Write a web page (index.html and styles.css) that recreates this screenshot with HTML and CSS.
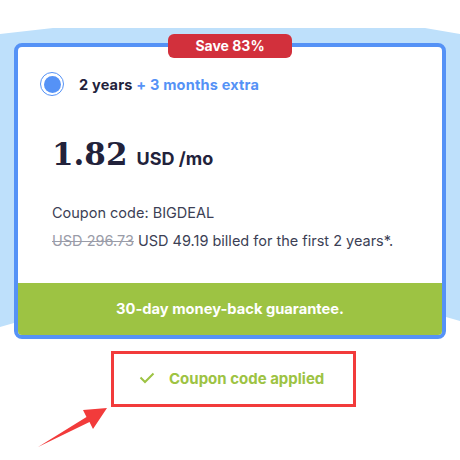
FILE: index.html
```html
<!DOCTYPE html>
<html lang="en">

<head>
    <meta charset="UTF-8" />
    <title>Plan</title>
    <link rel="stylesheet" href="styles.css">
</head>

<body>
    <div class="page">
        <div class="plan">
            <div class="card">
                <span class="badge">Save 83%</span>
                <div class="card-body">
                    <div class="option">
                        <span class="radio"><span class="dot"></span></span>
                        <span class="term">2 years <span class="extra">+ 3 months extra</span></span>
                    </div>
                    <div class="details">
                        <div class="price">
                            <span class="amount">1.82</span>
                            <span class="unit">USD /mo</span>
                        </div>
                        <p class="coupon">Coupon code: BIGDEAL</p>
                        <p class="billed"><s>USD 296.73</s> USD 49.19 billed for the first 2 years*.</p>
                    </div>
                </div>
                <div class="guarantee">30-day money-back guarantee.</div>
            </div>
        </div>

        <div class="applied">
            <svg class="check" width="16" height="12" viewBox="0 0 16 12">
                <path d="M1.5 5.5 L6 10 L14.5 1.5" fill="none" stroke="#9dc343" stroke-width="2" />
            </svg>
            <span>Coupon code applied</span>
        </div>

        <svg class="arrow" width="85" height="55" viewBox="0 0 85 55">
            <polygon points="8,47 56.5,17 53,10 77,8 63,29 59.5,22" fill="#f23b3b" />
        </svg>
    </div>
</body>

</html>
```

FILE: styles.css
```css
body {
    margin: 0;
    font-family: Inter, "Liberation Sans", sans-serif;
    background: #fff;
    color: #22223b;
}

.page {
    position: relative;
    width: 460px;
    height: 460px;
    overflow: hidden;
}

.plan {
    position: relative;
    margin-top: 28px;
    padding-top: 15px;
}

.plan::before {
    content: "";
    position: absolute;
    top: 0;
    left: 0;
    right: 0;
    height: 300px;
    background: #bee0fb;
    clip-path: polygon(0 6px, 53px 0, 425px 0, 100% 6px, 100% 293px, 446px 289px, 14px 295px, 0 299px);
}

.card {
    position: relative;
    margin: 0 14px;
    background: #fff;
    border: 4px solid #5592f6;
    border-radius: 8px;
}

.badge {
    position: absolute;
    top: -13px;
    left: 50%;
    transform: translateX(-50%);
    width: 124px;
    height: 24px;
    line-height: 24px;
    text-align: center;
    background: #d2303c;
    color: #fff;
    font-weight: 700;
    font-size: 14px;
    border-radius: 6px;
}

.card-body {
    padding: 25px 22px 34px;
}

.option {
    display: flex;
    align-items: center;
    gap: 15px;
}

.radio {
    box-sizing: border-box;
    width: 24px;
    height: 24px;
    border: 1.5px solid #5592f6;
    border-radius: 50%;
    display: flex;
    align-items: center;
    justify-content: center;
}

.dot {
    width: 17px;
    height: 17px;
    border-radius: 50%;
    background: #5592f6;
}

.term {
    font-size: 14.5px;
    letter-spacing: 0.2px;
    font-weight: 700;
}

.extra {
    color: #5592f6;
}

.details {
    padding-left: 12px;
}

.price {
    margin-top: 38px;
    display: flex;
    align-items: baseline;
    gap: 9px;
}

.amount {
    font-family: "DejaVu Serif", "Liberation Serif", serif;
    font-weight: 700;
    font-size: 31px;
    line-height: 40px;
}

.unit {
    font-size: 18px;
    font-weight: 700;
}

.coupon,
.billed {
    margin: 0;
    font-size: 14.5px;
    color: #3c3f55;
}

.coupon {
    margin-top: 30px;
}

.billed {
    margin-top: 11px;
}

.billed s {
    color: #9a9ca8;
}

.guarantee {
    height: 52px;
    line-height: 52px;
    text-align: center;
    background: #9dc343;
    color: #fff;
    font-weight: 700;
    font-size: 14.7px;
    border-radius: 0 0 4px 4px;
}

.applied {
    box-sizing: border-box;
    width: 245px;
    height: 56px;
    margin: 12px 0 0 111px;
    border: 3px solid #f23b3b;
    display: flex;
    align-items: center;
    gap: 14px;
    padding: 0 0 2px 25px;
    color: #9dc343;
    font-weight: 700;
    font-size: 15px;
}

.arrow {
    position: absolute;
    left: 30px;
    top: 400px;
}
```
